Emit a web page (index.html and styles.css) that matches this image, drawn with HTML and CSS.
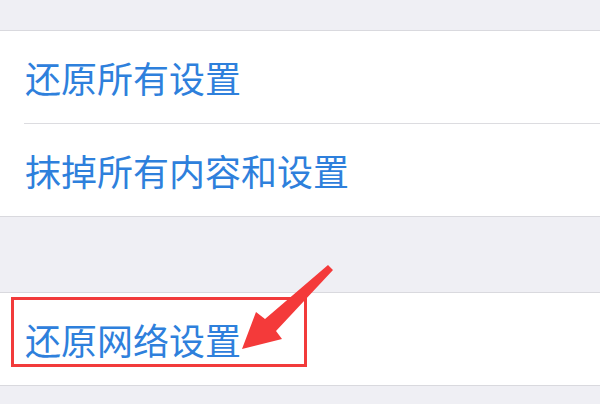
FILE: index.html
```html
<!DOCTYPE html>
<html lang="zh-CN">
<head>
  <meta charset="UTF-8" />
  <meta name="viewport" content="width=device-width, initial-scale=1.0"/>
  <title>还原</title>
  <link rel="stylesheet" href="styles.css">
</head>
<body>

  <!-- Group 1: reset all -->
  <div class="group first">
    <div class="row">还原所有设置</div>
    <div class="row">抹掉所有内容和设置</div>
  </div>

  <!-- Group 2: network, marked with a box and arrow -->
  <div class="group">
    <div class="row marked">
      还原网络设置
      <div class="mark-box"></div>
    </div>
  </div>

  <svg class="arrow" width="600" height="404" viewBox="0 0 600 404">
    <polygon fill="#f43a3a" points="242,349 256,312 265,319 328,265 333,270 276,331 282,339" />
  </svg>

</body>
</html>
```

FILE: styles.css
```css
body {
  font-family: "Noto Sans CJK SC", "Noto Sans", sans-serif;
  margin: 0;
  background-color: #efeff4;
  position: relative;
  height: 404px;
  overflow: hidden;
}

.group {
  background-color: #fff;
  border-top: 1px solid #d9d9de;
  border-bottom: 1px solid #d9d9de;
  margin-top: 75px;
}

.group.first {
  margin-top: 30px;
}

.row {
  height: 92px;
  display: flex;
  align-items: center;
  padding-left: 25px;
  font-size: 36px;
  color: #2e80dc;
  position: relative;
}

.row + .row::before {
  content: "";
  position: absolute;
  top: -1px;
  left: 24px;
  right: 0;
  border-top: 1px solid #dcdce0;
}

.row + .row {
  margin-top: 1px;
}

.mark-box {
  position: absolute;
  left: 11px;
  top: 4px;
  width: 290px;
  height: 64px;
  border: 3px solid #f23b3b;
}

.arrow {
  position: absolute;
  left: 0;
  top: 0;
}
```
